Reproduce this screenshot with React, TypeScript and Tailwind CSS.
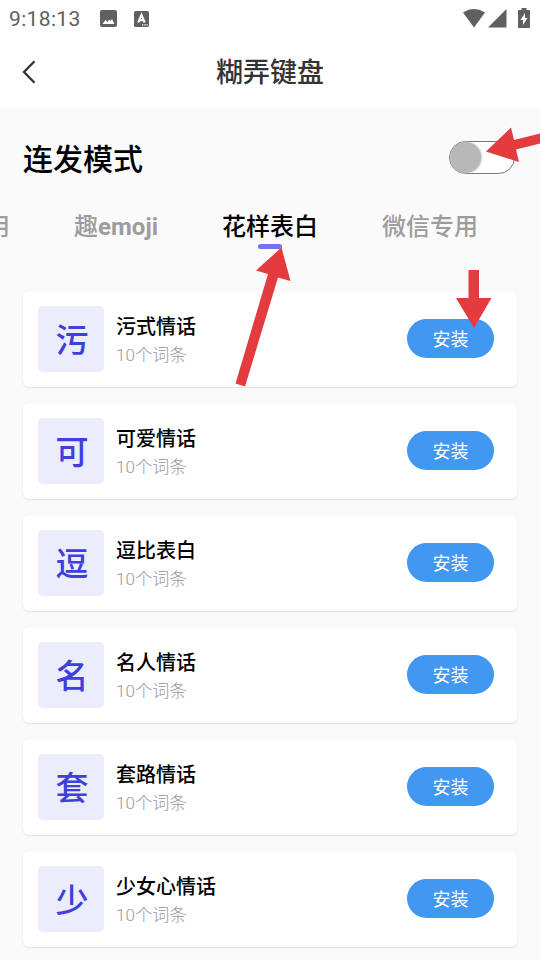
const packs = [
  { mark: '污', name: '污式情话' },
  { mark: '可', name: '可爱情话' },
  { mark: '逗', name: '逗比表白' },
  { mark: '名', name: '名人情话' },
  { mark: '套', name: '套路情话' },
  { mark: '少', name: '少女心情话' },
];

function StatusBar() {
  return (
    <div className="flex h-[37px] items-center justify-between pl-[9px] pr-[10px] text-[#606060]">
      <div className="flex items-center">
        <span className="w-[90px] text-[21px] leading-6 tracking-[0.35px]">9:18:13</span>
        <svg className="ml-[1px]" width="17" height="17" viewBox="0 0 17 17">
          <rect width="17" height="17" rx="2" fill="#606060" />
          <path d="M2.500 14l3-4 2 2 1.500-2.500 1.500 1.500 1.500-2L14.500 14z" fill="#fff" />
        </svg>
        <svg className="ml-[17px]" width="15" height="16" viewBox="0 0 15 16">
          <rect width="15" height="16" rx="1.5" fill="#606060" />
          <path d="M4.2 11.500L7.500 3.800l3.200 7.700M5.500 9.200h4" fill="none" stroke="#fff" strokeWidth="2" />
          <path d="M8 13.800h1.300M10.300 13.800h1.300M12.600 13.800h1.300" stroke="#fff" strokeWidth="1.300" />
        </svg>
      </div>
      <div className="flex items-center pb-[1px]">
        <svg width="24" height="19" viewBox="0 0 24 19">
          <path d="M1 3.500Q12-3.400 23 3.500L12 18.500z" fill="#606060" />
        </svg>
        <svg className="ml-[2px]" width="19" height="19" viewBox="0 0 19 19">
          <path d="M18.500 0v18.500H0z" fill="#606060" />
        </svg>
        <svg className="ml-[11px]" width="12" height="20" viewBox="0 0 12 20">
          <path d="M3.500 0h5v2H11q1 0 1 1v16q0 1-1 1H1q-1 0-1-1V3q0-1 1-1h2.500z" fill="#606060" />
          <path d="M7 5L2.500 12H5v5l4.500-7H7z" fill="#fff" />
        </svg>
      </div>
    </div>
  );
}

function Header() {
  return (
    <header className="grid h-[71px] grid-cols-[60px_1fr_60px] items-center pb-[2px]">
      <svg className="ml-[22px]" width="14" height="24" viewBox="0 0 14 24">
        <path d="M12.500 1.200L2 12l10.500 10.800" fill="none" stroke="#333" strokeWidth="2.300" />
      </svg>
      <h1 className="pt-[2px] text-center text-[27px] font-medium leading-9 text-[#333]">糊弄键盘</h1>
    </header>
  );
}

function Tabs() {
  return (
    <nav className="flex h-[48px] justify-end gap-16 whitespace-nowrap pr-[62px] pt-[1px] text-2xl font-bold leading-[34px] text-[#9d9d9d]">
      <span className="font-medium">用</span>
      <span>
        <span className="font-medium">趣</span>emoji
      </span>
      <div className="flex flex-col items-center">
        <span className="font-medium text-black">花样表白</span>
        <span className="h-[5px] w-6 rounded-full bg-[#7272f2]" />
      </div>
      <span className="font-medium">微信专用</span>
    </nav>
  );
}

function PackCard({ mark, name }: { mark: string; name: string }) {
  return (
    <li className="flex h-24 items-center rounded-[6px] bg-white pl-[15px] pr-[23px] shadow-[0_1px_1px_#e2e2e2,0_0_2px_#eeeeee]">
      <div className="flex size-[66px] items-center justify-center rounded-[5px] bg-[#ebecfc] pl-[2px] pt-[3px] text-[33px] font-medium text-[#3f3fdc]">
        {mark}
      </div>
      <div className="ml-3 flex-1 pt-[2px]">
        <div className="text-[20px] font-medium leading-[30px] text-black">{name}</div>
        <div className="text-[17px] font-light leading-[27px] tracking-[0.15px] text-[#989898]">10个词条</div>
      </div>
      <button className="mb-[1px] h-[39px] w-[87px] rounded-full bg-[#4297f1] pt-[1px] text-[18px] text-white">
        安装
      </button>
    </li>
  );
}

export default function App() {
  return (
    <div className="relative h-[960px] w-[540px] overflow-hidden bg-[#fafafa] font-['Roboto','Noto_Sans_CJK_SC',sans-serif]">
      <div className="bg-white">
        <StatusBar />
        <Header />
      </div>
      <section className="flex h-[101px] items-center justify-between pl-[23px] pr-[25px]">
        <h2 className="pt-[2px] text-[30px] font-medium leading-10 text-black">连发模式</h2>
        <div className="mb-[2px] h-[33px] w-[66px] rounded-full border border-[#777] bg-white">
          <div className="h-[31px] w-[31px] rounded-full bg-[#b8b8b8] shadow-[1px_0_2px_#ccc]" />
        </div>
      </section>
      <Tabs />
      <ul className="mt-[34px] flex flex-col gap-4 px-[23px]">
        {packs.map((pack) => (
          <PackCard key={pack.mark} mark={pack.mark} name={pack.name} />
        ))}
      </ul>
      <svg className="pointer-events-none absolute inset-0" width="540" height="960" viewBox="0 0 540 960">
        <g fill="#e43b3f">
          <path d="M486 151.500L511 127.500L514 140L540 133.500V143.500L516 149.500L519 162z" />
          <path d="M281.500 247.500L290.500 281L278 277.500L245 386.500L235.500 383.500L268 274L256 270.500z" />
          <path d="M468.500 270H479V298H491.500L474 328L456 298H468.500z" />
        </g>
      </svg>
    </div>
  );
}
